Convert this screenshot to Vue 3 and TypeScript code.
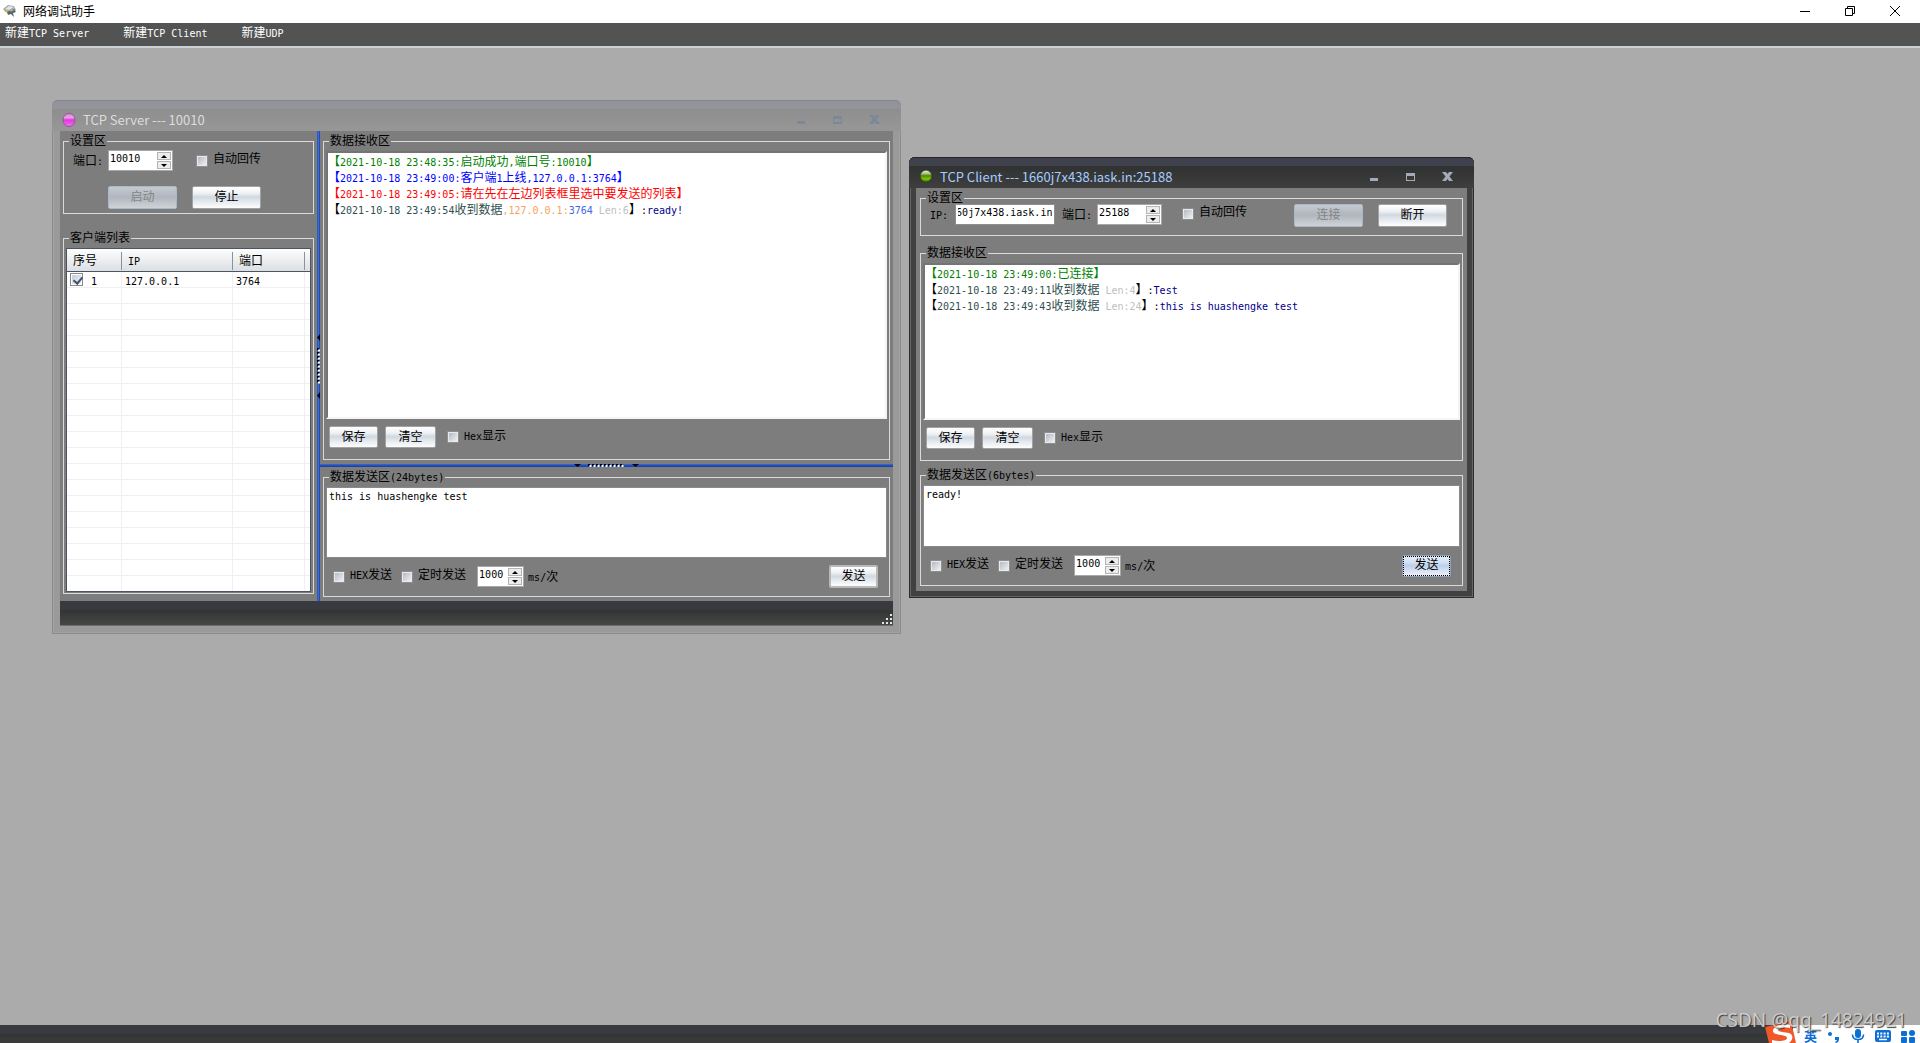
<script setup lang="ts">
import { h, onMounted, ref } from 'vue'

interface Segment { text: string; color: string }
type Line = Segment[]

// Splits a string so that half-width and full-width characters keep a 1:2 grid.
const Mixed = (props: { t: string }) =>
  h('span', { class: 'mixed' }, (props.t.match(/[\x20-\x7e]+|[^\x20-\x7e]+/g) ?? []).map((run) =>
    h('span', { class: run.charCodeAt(0) < 127 ? 'half' : 'full' }, run)))
Mixed.props = ['t']

const menus = ['新建TCP Server', '新建TCP Client', '新建UDP']

const green = '#008000'
const blue = '#0000ff'
const red = '#ff0000'
const slate = '#2f4f4f'
const silver = '#c0c0c0'
const navy = '#00008b'
const black = '#000000'

const serverLog: Line[] = [
  [{ text: '【2021-10-18 23:48:35:启动成功,端口号:10010】', color: green }],
  [{ text: '【2021-10-18 23:49:00:客户端1上线,127.0.0.1:3764】', color: blue }],
  [{ text: '【2021-10-18 23:49:05:请在先在左边列表框里选中要发送的列表】', color: red }],
  [
    { text: '【', color: black },
    { text: '2021-10-18 23:49:54收到数据', color: slate },
    { text: ',127.0.0.1:', color: '#f4a460' },
    { text: '3764', color: '#4169e1' },
    { text: ' Len:6', color: silver },
    { text: '】:', color: black },
    { text: 'ready!', color: navy },
  ],
]

const received = (time: string, len: number, body: string): Line => [
  { text: '【', color: black },
  { text: `2021-10-18 ${time}收到数据`, color: slate },
  { text: ` Len:${len}`, color: silver },
  { text: '】:', color: black },
  { text: body, color: navy },
]

const clientLog: Line[] = [
  [{ text: '【2021-10-18 23:49:00:已连接】', color: green }],
  received('23:49:11', 4, 'Test'),
  received('23:49:43', 24, 'this is huashengke test'),
]

const serverPort = ref('10010')
const serverInterval = ref('1000')
const serverMessage = ref('this is huashengke test')
const clientHost = ref('1660j7x438.iask.in')
const clientPort = ref('25188')
const clientInterval = ref('1000')
const clientMessage = ref('ready!')
const rowChecked = ref(true)

const hostBox = ref<HTMLInputElement | null>(null)
onMounted(() => {
  if (hostBox.value) hostBox.value.scrollLeft = hostBox.value.scrollWidth
})
</script>

<template>
  <div class="app">
    <header class="titlebar">
      <svg class="logo" viewBox="0 0 14 14" width="14" height="14" aria-hidden="true">
        <path d="M0 5 5 1l6 1 2 4-4 2-7-1z" fill="#a3a8a8" />
        <path d="M2 5 6 2l5 1-5 3z" fill="#e4e6e2" />
        <path d="M1 6l4 1 1 2-4-1z" fill="#d6b84a" />
        <path d="M4 8l7-3 2 3-3 1 1 4-3-3-3 1z" fill="#5c6466" />
        <path d="M7 6l3-1 1 1-3 2z" fill="#8fb4b4" />
      </svg>
      <span class="app-name">网络调试助手</span>
      <div class="sys">
        <button aria-label="最小化"><svg viewBox="0 0 10 10" width="10" height="10"><path d="M0 5.500h10" stroke="#000" /></svg></button>
        <button aria-label="还原"><svg viewBox="0 0 10 10" width="10" height="10"><path d="M.5 2.500h7v7h-7zM2.500 2V.5h7v7H8" fill="none" stroke="#000" /></svg></button>
        <button aria-label="关闭"><svg viewBox="0 0 10 10" width="10" height="10"><path d="M0 0l10 10M10 0L0 10" stroke="#000" /></svg></button>
      </div>
    </header>

    <nav class="menu">
      <button v-for="m in menus" :key="m"><Mixed :t="m" /></button>
    </nav>

    <main class="workspace">
      <section class="win server">
        <header class="caption">
          <svg class="orb" viewBox="0 0 14 14" width="14" height="14" aria-hidden="true">
            <defs>
              <linearGradient id="pink" x1="0" y1="0" x2="0" y2="1">
                <stop offset="0" stop-color="#cf86cc" /><stop offset=".3" stop-color="#e9a2e7" />
                <stop offset=".5" stop-color="#de3cda" /><stop offset="1" stop-color="#f272f2" />
              </linearGradient>
            </defs>
            <ellipse cx="7" cy="7" rx="6" ry="6.600" fill="url(#pink)" stroke="#8a4c88" stroke-width=".8" />
          </svg>
          <span>TCP Server --- 10010</span>
          <div class="win-btns">
            <button aria-label="最小化"><svg viewBox="0 0 11 10" width="11" height="10"><path d="M0 6h8v3H0z" /></svg></button>
            <button aria-label="最大化"><svg viewBox="0 0 11 10" width="11" height="10"><path d="M0 1h9v8H0zM1 4v3h7V4z" fill-rule="evenodd" /></svg></button>
            <button aria-label="关闭"><svg viewBox="0 0 11 10" width="11" height="10"><path d="M0 0h4l1.500 2L7 0h4L7.500 4.500 11 9H7L5.500 7 4 9H0l3.500-4.500z" /></svg></button>
          </div>
        </header>

        <div class="body split">
          <div class="side">
            <fieldset>
              <legend><Mixed t="设置区" /></legend>
              <div class="row conf">
                <label for="s-port"><Mixed t="端口:" /></label>
                <div class="spin wide">
                  <input id="s-port" v-model="serverPort" type="text">
                  <span class="arrows"><button aria-label="增加"></button><button class="down" aria-label="减少"></button></span>
                </div>
                <label class="check echo"><input type="checkbox"><Mixed t="自动回传" /></label>
              </div>
              <div class="row actions">
                <button class="btn long" disabled>启动</button>
                <button class="btn long">停止</button>
              </div>
            </fieldset>

            <fieldset class="grow clients">
              <legend><Mixed t="客户端列表" /></legend>
              <div class="list">
                <table>
                  <colgroup><col class="c1"><col class="c2"><col class="c3"><col></colgroup>
                  <thead>
                    <tr><th><Mixed t="序号" /></th><th><Mixed t="IP" /></th><th><Mixed t="端口" /></th><th></th></tr>
                  </thead>
                  <tbody>
                    <tr>
                      <td class="pick"><label><input v-model="rowChecked" type="checkbox"><Mixed t="1" /></label></td>
                      <td><Mixed t="127.0.0.1" /></td><td><Mixed t="3764" /></td><td></td>
                    </tr>
                    <tr v-for="n in 19" :key="n"><td></td><td></td><td></td><td></td></tr>
                  </tbody>
                </table>
              </div>
            </fieldset>
          </div>

          <div class="bar vertical">
            <svg viewBox="0 0 3 65" width="3" height="65" aria-hidden="true">
              <path d="M3 0v7L0 3.500zM3 58v7L0 61.500z" fill="#000022" />
              <path d="M1 14v35" stroke="#000" stroke-width="2" stroke-dasharray="2 2" />
              <path d="M2 15.500v35" stroke="#fff" stroke-width="2" stroke-dasharray="2 2" />
            </svg>
          </div>

          <div class="main">
            <div class="pane grow">
              <fieldset class="grow">
                <legend><Mixed t="数据接收区" /></legend>
                <div class="log">
                  <p v-for="(line, i) in serverLog" :key="i">
                    <span v-for="(s, j) in line" :key="j" :style="{ color: s.color }"><Mixed :t="s.text" /></span>
                  </p>
                </div>
                <div class="row tools">
                  <button class="btn save">保存</button>
                  <button class="btn clear">清空</button>
                  <label class="check"><input type="checkbox"><Mixed t="Hex显示" /></label>
                </div>
              </fieldset>
            </div>

            <div class="bar horizontal">
              <svg viewBox="0 0 65 3" width="65" height="3" aria-hidden="true">
                <path d="M0 0h7L3.500 3zM58 0h7l-3.500 3z" fill="#000022" />
                <path d="M14 1h35" stroke="#000" stroke-width="2" stroke-dasharray="2 2" />
                <path d="M15.500 2h35" stroke="#fff" stroke-width="2" stroke-dasharray="2 2" />
              </svg>
            </div>

            <div class="pane">
              <fieldset>
                <legend><Mixed t="数据发送区(24bytes)" /></legend>
                <textarea v-model="serverMessage" class="tall" aria-label="数据发送区"></textarea>
                <div class="row send">
                  <label class="check"><input type="checkbox"><Mixed t="HEX发送" /></label>
                  <label class="check timer"><input type="checkbox"><Mixed t="定时发送" /></label>
                  <div class="spin">
                    <input id="s-ms" v-model="serverInterval" type="text">
                    <span class="arrows"><button aria-label="增加"></button><button class="down" aria-label="减少"></button></span>
                  </div>
                  <label class="unit" for="s-ms"><Mixed t="ms/次" /></label>
                  <button class="btn save push thick">发送</button>
                </div>
              </fieldset>
            </div>
          </div>
        </div>

        <footer class="win-status">
          <svg viewBox="0 0 11 11" width="11" height="11" aria-hidden="true">
            <path d="M8 0h2v2H8zM4 4h2v2H4zM8 4h2v2H8zM0 8h2v2H0zM4 8h2v2H4zM8 8h2v2H8z" fill="#e6e6e6" />
          </svg>
        </footer>
      </section>

      <section class="win client">
        <header class="caption">
          <svg class="orb" viewBox="0 0 14 14" width="14" height="14" aria-hidden="true">
            <defs>
              <linearGradient id="lime" x1="0" y1="0" x2="0" y2="1">
                <stop offset="0" stop-color="#f2f6e6" /><stop offset=".3" stop-color="#a9bf84" />
                <stop offset=".48" stop-color="#4c8a00" /><stop offset=".75" stop-color="#7cc400" /><stop offset="1" stop-color="#4f8500" />
              </linearGradient>
            </defs>
            <circle cx="7" cy="6" r="5.700" fill="url(#lime)" stroke="#2d4a10" stroke-width=".6" />
          </svg>
          <span>TCP Client --- 1660j7x438.iask.in:25188</span>
          <div class="win-btns">
            <button aria-label="最小化"><svg viewBox="0 0 11 10" width="11" height="10"><path d="M0 6h8v3H0z" /></svg></button>
            <button aria-label="最大化"><svg viewBox="0 0 11 10" width="11" height="10"><path d="M0 1h9v8H0zM1 4v4h7V4z" fill-rule="evenodd" /></svg></button>
            <button aria-label="关闭"><svg viewBox="0 0 11 10" width="11" height="10"><path d="M0 0h4l1.500 2L7 0h4L7.500 4.500 11 9H7L5.500 7 4 9H0l3.500-4.500z" /></svg></button>
          </div>
        </header>

        <div class="body stack">
          <fieldset class="link">
            <legend><Mixed t="设置区" /></legend>
            <div class="row conn">
              <label for="c-host"><Mixed t="IP:" /></label>
              <input id="c-host" ref="hostBox" v-model="clientHost" class="host" type="text">
              <label for="c-port"><Mixed t="端口:" /></label>
              <div class="spin wide">
                <input id="c-port" v-model="clientPort" type="text">
                <span class="arrows"><button aria-label="增加"></button><button class="down" aria-label="减少"></button></span>
              </div>
              <label class="check echo"><input type="checkbox"><Mixed t="自动回传" /></label>
              <button class="btn long push" disabled>连接</button>
              <button class="btn long">断开</button>
            </div>
          </fieldset>

          <fieldset class="grow">
            <legend><Mixed t="数据接收区" /></legend>
            <div class="log">
              <p v-for="(line, i) in clientLog" :key="i">
                <span v-for="(s, j) in line" :key="j" :style="{ color: s.color }"><Mixed :t="s.text" /></span>
              </p>
            </div>
            <div class="row tools">
              <button class="btn save">保存</button>
              <button class="btn clear">清空</button>
              <label class="check"><input type="checkbox"><Mixed t="Hex显示" /></label>
            </div>
          </fieldset>

          <fieldset class="outbox">
            <legend><Mixed t="数据发送区(6bytes)" /></legend>
            <textarea v-model="clientMessage" aria-label="数据发送区"></textarea>
            <div class="row send">
              <label class="check"><input type="checkbox"><Mixed t="HEX发送" /></label>
              <label class="check timer"><input type="checkbox"><Mixed t="定时发送" /></label>
              <div class="spin">
                <input id="c-ms" v-model="clientInterval" type="text">
                <span class="arrows"><button aria-label="增加"></button><button class="down" aria-label="减少"></button></span>
              </div>
              <label class="unit" for="c-ms"><Mixed t="ms/次" /></label>
              <button class="btn save push focused">发送</button>
            </div>
          </fieldset>
        </div>
      </section>
    </main>

    <footer class="status"></footer>

    <div class="ime">
      <svg class="sogou" viewBox="0 0 32 22" width="32" height="22" aria-hidden="true">
        <path d="M0 6 26 0l5 22H4z" fill="#f0582a" />
        <path d="M25 4C18 1 8 5 8 10c0 5 14 3 14 7 0 3-8 4-15 2v3h17c4-3 5-8 0-10-4-1-11-1-11-3s6-3 12-2z" fill="#fff" />
      </svg>
      <div class="ime-items">
        <b>英</b>
        <svg viewBox="0 0 14 14" width="14" height="14"><circle cx="3" cy="5" r="2" fill="#0c6fd6" /><path d="M8 8h4v2q0 3-3 4l-1-1q2-1 2-2H8z" fill="#0c6fd6" /></svg>
        <svg viewBox="0 0 14 14" width="14" height="14"><rect x="4" y="0" width="6" height="9" rx="3" fill="#0c6fd6" /><path d="M1.500 5.500q0 5 5.500 5t5.500-5M7 10v4" fill="none" stroke="#0c6fd6" stroke-width="1.600" /></svg>
        <svg viewBox="0 0 16 14" width="16" height="14"><rect x="0" y="1" width="16" height="12" rx="2" fill="#0c6fd6" /><path d="M2 4.500h12M2 7.500h12" stroke="#fff" stroke-width="2" stroke-dasharray="2 1.300" /><path d="M4 10.500h8" stroke="#fff" stroke-width="1.500" /></svg>
        <svg viewBox="0 0 14 14" width="14" height="14" fill="#0c6fd6"><rect x="0" y="2" width="6" height="5" rx="1" /><rect x="0" y="8" width="6" height="6" rx="1" /><rect x="8" y="8" width="6" height="6" rx="1" /><circle cx="11" cy="4" r="3" /></svg>
      </div>
    </div>
    <div class="watermark">CSDN @qq_14824921</div>
  </div>
</template>

<style>
body { background: #ababab; }
.mixed { white-space: pre; }
.mixed .half { font: 10px "DejaVu Sans Mono", monospace; line-height: 1px; }
.mixed .full { font-size: 12px; }
</style>

<style scoped>
.app {
  position: relative;
  display: flex;
  flex-direction: column;
  min-height: 100vh;
  overflow: hidden;
  font: 12px/12px "Noto Sans CJK SC", sans-serif;
  color: #000;
}
.app * { box-sizing: border-box; }
button { border: 0; padding: 0; background: none; font: inherit; color: inherit; }
p { margin: 0; }
svg { display: block; flex: none; }

.titlebar { display: flex; align-items: center; height: 23px; padding: 0 20px 2px 3px; background: #fff; }
.app-name { margin-left: 6px; line-height: 20px; }
.sys { display: flex; gap: 35px; margin-left: auto; }

.menu { display: flex; align-items: center; gap: 34px; height: 25px; padding: 0 5px 5px; background: #535353; border-bottom: 2px solid #c9d1d5; color: #fff; }

.workspace { position: relative; flex: 1; background: #ababab; }
.status { height: 18px; background: linear-gradient(#383a40 0 9px, #323434 9px, #3c3c3c); }

.win { position: absolute; display: flex; flex-direction: column; border-radius: 6px 6px 0 0; }
.server { left: 52px; top: 52px; width: 849px; height: 534px; padding: 0 8px 8px; background: #9a9a9a; box-shadow: inset 0 0 0 1px #8c8c8c, inset 0 0 0 2px #a2a2a2; }
.client { left: 909px; top: 109px; width: 565px; height: 441px; padding: 0 7px 7px; background: #414141; box-shadow: inset 0 0 0 1px #2b2b2b, inset 0 0 0 2px #666; }

.caption { display: flex; align-items: center; height: 31px; padding: 8px 21px 0 10px; border-radius: 6px 6px 0 0; font: 13px/20px "Noto Sans CJK SC", sans-serif; }
.caption span { margin-left: 7px; white-space: nowrap; }
.server .caption { margin: 0 -8px; border-top: 1px solid #858585; background: linear-gradient(#93949b 0 8px, #8d8e8d 8px, #979797); color: #dcdcdc; }
.client .caption { margin: 0 -7px; border-top: 1px solid #24262a; background: linear-gradient(#3f424d 0 8px, #303231 8px, #3e3e3e); color: #a4ccff; }
.win-btns { display: flex; gap: 25px; margin-left: auto; }
.server .win-btns { fill: #7c879a; }
.client .win-btns { fill: #a3abb8; }

.body { flex: 1; min-height: 0; background: #7d7d7d; }
.split { display: flex; }
.side { display: flex; flex-direction: column; gap: 18px; width: 257px; padding: 4px 3px 7px; }
.main { flex: 1; min-width: 0; display: flex; flex-direction: column; }
.pane { display: flex; flex-direction: column; padding: 4px 3px; }
.grow { flex: 1; min-height: 0; }
.stack { display: flex; flex-direction: column; padding: 4px 4px 5px; }
.link { margin-bottom: 11px; padding-bottom: 8px; }
.outbox { margin-top: 8px; }

.bar { display: flex; align-items: center; justify-content: center; }
.vertical { width: 3px; background: linear-gradient(90deg, #2450b4, #3a6cd4, #1a3c96); }
.horizontal { height: 3px; background: linear-gradient(#3a6cd4, #2450b4, #1a3c96); }

fieldset { display: flex; flex-direction: column; min-width: 0; margin: 0; padding: 0 2px; border: 1px solid #dadada; }
fieldset.link { padding-bottom: 8px; }
legend { height: 12px; margin-left: 3px; padding: 0 1px; line-height: 10px; }

.row { display: flex; align-items: center; flex: none; }
.row > label:not(.check) { padding-bottom: 2px; }
.conf { padding: 3px 0 0 7px; gap: 5px; }
.conf .echo { margin-left: 18px; }
.actions { gap: 15px; margin: 15px 0 4px; padding-left: 42px; }
.tools { height: 22px; margin: 7px 0 11px; padding-left: 3px; gap: 7px; }
.tools .check { margin-left: 4px; }
.send { height: 23px; margin: 7px 0 8px; padding: 0 9px 0 7px; }
.send .timer { margin: 0 11px 0 9px; }
.row > .unit { margin-left: 4px; }
.conn { gap: 5px; padding: 0 13px 0 7px; }
.row.conn > label { padding-bottom: 4px; }
.conn .host { margin: 0 2px; }
.conn .host, .conn .spin { margin-bottom: 2px; }
.conn .echo { margin-left: 15px; }
.conn .btn + .btn { margin-left: 10px; }
.push { margin-left: auto; }

.check { display: flex; align-items: center; gap: 5px; }
.check .mixed { padding-bottom: 5px; }
input[type="checkbox"] { appearance: none; flex: none; width: 12px; height: 12px; margin: 0; border: 2px solid #e8eaec; outline: 1px solid #8e8e8e; outline-offset: -1px; background: linear-gradient(135deg, #b4b9c2, #eef0f4); }

input[type="text"], textarea { font: 10px/12px "DejaVu Sans Mono", monospace; color: #000; border: 0; outline: 0; border-radius: 0; }
.conn .host { width: 100px; height: 21px; padding: 0 2px 4px; border: 1px solid #8e8e8e; background: #fff; }
.spin { display: flex; width: 47px; height: 21px; border: 1px solid #a6a8ac; background: #fff; }
.spin.wide { width: 65px; }
.spin input { flex: 1; width: 0; min-width: 0; height: 15px; padding: 0 0 0 1px; background: none; }
.arrows { display: flex; flex-direction: column; gap: 1px; width: 15px; padding: 1px 1px 0 0; }
.arrows button { display: flex; align-items: center; justify-content: center; height: 8px; border: 1px solid #b4b4b4; background: #ececec; }
.arrows button::before { content: ""; border: 3px solid transparent; border-top-width: 0; border-bottom-color: #000; }
.arrows .down::before { border-width: 3px 3px 0; border-top-color: #000; }

.btn { height: 22px; padding-bottom: 3px; border: 1px solid #a2a2a2; border-radius: 2px; background: linear-gradient(#fff, #eef1f4 30%, #d0d8e1 48%, #e6eaef 70%, #fdfdfd); color: #000; text-align: center; }
.long { width: 69px; height: 23px; }
.save { width: 49px; }
.clear { width: 51px; }
.btn:disabled { border-color: #a9b8cb; background: linear-gradient(#c6cad0, #b0b6be 48%, #cfd3d7); color: #858585; }
.thick { height: 23px; border: 2px solid #b9b9b9; }
.focused { border: 1px solid #8fa0bc; outline: 1px dotted #000; outline-offset: -2px; background: linear-gradient(#e6eefa, #d5e2f3 30%, #bcd0ea 48%, #d2dff0 70%, #f0f0fc); }

.log { flex: 1; min-height: 0; margin-top: 4px; overflow: hidden; border: 2px solid; border-color: #747474 #f4f4f4 #f4f4f4 #747474; background: #fff; }
.log p { height: 16px; line-height: 16px; white-space: nowrap; }
textarea { flex: none; width: 100%; height: 62px; margin: 4px 0 0; padding: 3px 2px; resize: none; background: #fff; border: 1px solid #8a8a8a; }
.tall { height: 71px; }

.list { flex: 1; min-height: 0; margin: 4px 0 1px; overflow: hidden; border: 1px solid #4c545f; background: #fff; }
table { width: 100%; table-layout: fixed; border-collapse: separate; border-spacing: 0; }
.c1 { width: 55px; }
.c2 { width: 111px; }
.c3 { width: 72px; }
th { height: 23px; padding: 0 0 0 6px; text-align: left; font-weight: 400; background: linear-gradient(90deg, #8b929b, #8b929b) right 3px / 1px 18px no-repeat, linear-gradient(#fdfdfd, #dcdfe3); border-bottom: 1px solid #4c545f; }
th:last-child { background: linear-gradient(#fdfdfd, #dcdfe3); }
td { height: 16px; padding: 0 0 0 3px; border-right: 1px solid #efefef; border-bottom: 1px solid #efefef; line-height: 12px; }
td:last-child { border-right: 0; }
.pick label { display: flex; align-items: center; gap: 8px; }
.pick input[type="checkbox"] { width: 13px; height: 13px; border: 1px solid #85888d; outline: 0; box-shadow: inset 0 0 0 1px #fff; background: linear-gradient(135deg, #c4c9d0, #f4f5f8); }
.pick input:checked::before { content: ""; display: block; width: 4px; height: 7px; margin: 1px 0 0 4px; border: solid #3c5672; border-width: 0 2px 2px 0; transform: rotate(40deg); }

.win-status { display: flex; align-items: flex-end; justify-content: flex-end; height: 25px; background: linear-gradient(#383a40 0 9px, #323434 9px, #464646); border-bottom: 1px solid #6e6e6e; }

.ime { position: absolute; right: 0; bottom: 0; display: flex; align-items: flex-end; }
.sogou { position: relative; z-index: 1; margin-right: -4px; }
.ime-items { display: flex; align-items: center; gap: 10px; height: 18px; padding: 3px 5px 0 11px; background: #fff; color: #0c6fd6; }
.ime-items b { font-size: 13px; line-height: 14px; }
.watermark { position: absolute; right: 13px; bottom: 10px; font: 19px/26px "Noto Sans", sans-serif; color: #d0d0d0; opacity: .9; text-shadow: 1px 1px 1px #333; z-index: 2; }
</style>
